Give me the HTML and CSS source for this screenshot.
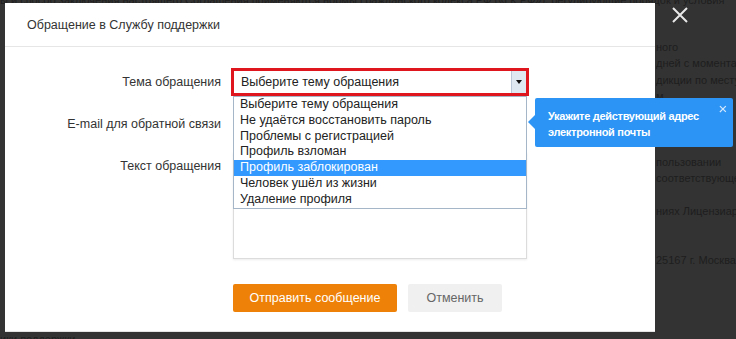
FILE: index.html
```html
<!DOCTYPE html>
<html lang="ru">
<head>
  <meta charset="UTF-8"/>
  <title>Обращение в Службу поддержки</title>
  <link rel="stylesheet" href="styles.css">
</head>
<body>

  <!-- СТРАНИЦА ПОД ЗАТЕМНЕНИЕМ -->
  <div class="page">
    <p class="page-top">ы и способ заключения настоящего Соглашения применяются нормы Гражданского кодекса РФ («ГК РФ»), регулирующие порядок и условия</p>
    <div class="page-side">
      <p>ного</p>
      <p>дней с момента</p>
      <p>дикции по месту</p>
      <p>м</p>
      <p>&nbsp;</p>
      <p>&nbsp;</p>
      <p>&nbsp;</p>
      <p>пользовании</p>
      <p>соответствующе</p>
      <p>&nbsp;</p>
      <p>ниях Лицензиара</p>
      <p>&nbsp;</p>
      <p>&nbsp;</p>
      <p>25167 г. Москва</p>
    </div>
    <p class="page-bottom">ики поддержки</p>
  </div>

  <!-- ОКНО ОБРАЩЕНИЯ -->
  <div class="overlay">
    <div class="modal">
      <div class="modal-head">Обращение в Службу поддержки</div>

      <form class="modal-body">
        <div class="row">
          <label class="row-label">Тема обращения</label>
          <div class="field">
            <div class="select-wrap">
              <div class="select">
                <span>Выберите тему обращения</span>
                <span class="select-arrow"></span>
              </div>
            </div>
            <ul class="dropdown">
              <li>Выберите тему обращения</li>
              <li>Не удаётся восстановить пароль</li>
              <li>Проблемы с регистрацией</li>
              <li>Профиль взломан</li>
              <li class="active">Профиль заблокирован</li>
              <li>Человек ушёл из жизни</li>
              <li>Удаление профиля</li>
            </ul>
          </div>
        </div>

        <div class="row">
          <label class="row-label">E-mail для обратной связи</label>
          <div class="field">
            <input type="text" class="input"/>
          </div>
        </div>

        <div class="row row-top">
          <label class="row-label">Текст обращения</label>
          <div class="field">
            <textarea class="textarea"></textarea>
          </div>
        </div>

        <div class="actions">
          <button type="button" class="btn btn-send">Отправить сообщение</button>
          <button type="button" class="btn btn-cancel">Отменить</button>
        </div>
      </form>

      <!-- подсказка -->
      <div class="tip">
        Укажите действующий адрес<br>электронной почты
        <span class="tip-close">×</span>
      </div>
    </div>

    <svg class="close" width="18" height="18" viewBox="0 0 18 18">
      <path d="M2 2 L16 16 M16 2 L2 16" stroke="#e8e8e8" stroke-width="2"/>
    </svg>
  </div>

</body>
</html>
```

FILE: styles.css
```css
* {
  margin: 0;
  padding: 0;
  box-sizing: border-box;
}

body {
  font-family: 'Liberation Sans', Arial, sans-serif;
  background: #333333;
  color: #1e1e1e;
  font-size: 11px;
  overflow: hidden;
  height: 339px;
}

/* страница за окном */
.page {
  height: 339px;
  display: flex;
  flex-direction: column;
  overflow: hidden;
}

.page-top {
  margin-top: -7px;
  line-height: 14px;
  white-space: nowrap;
  overflow: hidden;
}

.page-side {
  margin-left: 656px;
  margin-top: 32px;
  white-space: nowrap;
  line-height: 16.4px;
  overflow: hidden;
}

.page-bottom {
  margin-top: auto;
  margin-bottom: -7px;
  line-height: 14px;
}

/* затемнение */
.overlay {
  position: fixed;
  top: 0;
  left: 0;
  width: 100%;
  height: 100%;
}

.modal {
  position: absolute;
  top: 3px;
  left: 5px;
  width: 650px;
  height: 329px;
  background: #ffffff;
  border-bottom: 1px solid #e4e4e4;
  color: #333;
  font-size: 12.5px;
}

.modal-head {
  height: 44px;
  padding: 15px 0 0 22px;
  border-bottom: 1px solid #e6e6e6;
  color: #333;
}

.modal-body {
  padding-top: 21px;
}

.row {
  display: grid;
  grid-template-columns: 216px 298px;
  column-gap: 10px;
  align-items: center;
  margin-bottom: 14px;
}

.row-top {
  align-items: start;
}

.row-top .row-label {
  padding-top: 7px;
}

.row-label {
  text-align: right;
  color: #333;
}

.field {
  position: relative;
}

.select-wrap {
  border: 3px solid #e0161e;
}

.select {
  height: 22px;
  display: flex;
  align-items: center;
  justify-content: space-between;
  padding-left: 7px;
  color: #222;
}

.select-arrow {
  width: 15px;
  height: 22px;
  background: #dfe7f1;
  border-left: 1px solid #b9c7d8;
  position: relative;
}

.select-arrow::after {
  content: "";
  position: absolute;
  left: 4px;
  top: 9px;
  border-left: 3px solid transparent;
  border-right: 3px solid transparent;
  border-top: 4px solid #111;
}

.dropdown {
  position: absolute;
  top: 28px;
  left: 2px;
  width: 294px;
  list-style: none;
  background: #fff;
  border: 1px solid #a5b6c9;
  z-index: 2;
}

.dropdown li {
  height: 15.8px;
  line-height: 15px;
  padding-left: 6px;
  color: #222;
}

.dropdown li.active {
  background: #3399ff;
  color: #fff;
}

.input {
  display: block;
  width: 294px;
  height: 28px;
  margin-left: 2px;
  border: 1px solid #dcdcdc;
}

.textarea {
  display: block;
  width: 294px;
  height: 107px;
  margin-left: 2px;
  border: 1px solid #dcdcdc;
  box-shadow: 0 1px 2px rgba(0, 0, 0, 0.08);
  resize: none;
}

.actions {
  display: flex;
  gap: 11px;
  padding-left: 228px;
  margin-top: 25px;
}

.btn {
  height: 28px;
  border: none;
  border-radius: 2px;
  font-family: inherit;
  font-size: 12.5px;
  cursor: pointer;
}

.btn-send {
  width: 164px;
  background: #ee8208;
  color: #fff;
}

.btn-cancel {
  width: 94px;
  background: #f0f0f0;
  color: #666;
}

/* подсказка */
.tip {
  position: absolute;
  top: 95px;
  left: 530px;
  width: 198px;
  height: 49px;
  padding: 10px 8px 0 13px;
  background: #2b94f4;
  border-radius: 2px;
  color: #fff;
  font-size: 11px;
  font-weight: bold;
  letter-spacing: -0.3px;
  line-height: 16px;
  white-space: nowrap;
}

.tip::before {
  content: "";
  position: absolute;
  left: -7px;
  top: 17px;
  border-top: 7px solid transparent;
  border-bottom: 7px solid transparent;
  border-right: 7px solid #2b94f4;
}

.tip-close {
  position: absolute;
  top: 3px;
  right: 6px;
  font-size: 15px;
  font-weight: normal;
  color: #d6e9fd;
}

.close {
  position: absolute;
  top: 6px;
  left: 671px;
}
```
